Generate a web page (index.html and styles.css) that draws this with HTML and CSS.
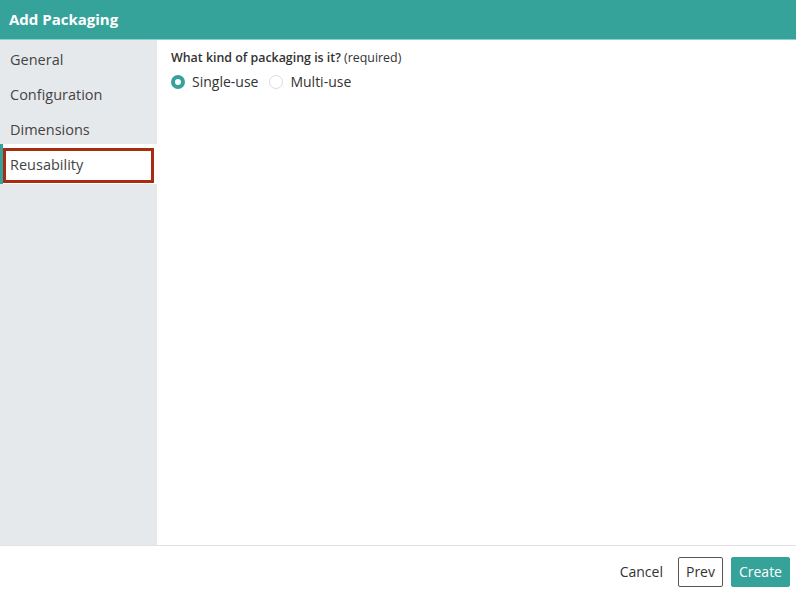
FILE: index.html
```html
<!DOCTYPE html>
<html>
<head>
<meta charset="utf-8">
<link rel="stylesheet" href="styles.css">
</head>
<body>
<div class="dialog">
  <header class="header">Add Packaging</header>
  <div class="main">
    <nav class="sidebar">
      <div class="nav-item">General</div>
      <div class="nav-item">Configuration</div>
      <div class="nav-item">Dimensions</div>
      <div class="nav-item active"><span class="focus">Reusability</span></div>
    </nav>
    <section class="content">
      <div class="question"><b>What kind of packaging is it?</b> (required)</div>
      <div class="radios">
        <label class="radio"><span class="dot checked"></span>Single-use</label>
        <label class="radio"><span class="dot"></span>Multi-use</label>
      </div>
    </section>
  </div>
  <footer class="footer">
    <button class="btn link">Cancel</button>
    <button class="btn outline">Prev</button>
    <button class="btn primary">Create</button>
  </footer>
</div>
</body>
</html>
```
FILE: styles.css
```css
* { box-sizing: border-box; }
html, body { margin: 0; padding: 0; }
body {
  font-family: "Open Sans", "Noto Sans", sans-serif;
  color: #3d3d3d;
  background: #fff;
}
.dialog {
  width: 796px;
  height: 597px;
  display: flex;
  flex-direction: column;
}
.header {
  height: 40px;
  background: #35a39a;
  color: #fff;
  font-family: "Open Sans", sans-serif;
  font-weight: 700;
  font-size: 15px;
  padding: 9px 0 0 9px;
  border-bottom: 1px solid #8fd0ca;
}
.main {
  flex: 1;
  display: flex;
}
.sidebar {
  width: 157px;
  background: #e6e9ec;
  padding-top: 4px;
  display: flex;
  flex-direction: column;
}
.nav-item {
  height: 35px;
  padding: 6px 0 0 10px;
  font-size: 14.5px;
  color: #444;
}
.nav-item.active {
  margin-top: -5px;
  height: 40px;
  background: #fff;
  border-left: 3px solid #35a39a;
  padding: 4px 3px 0 0;
}
.focus {
  display: block;
  height: 35px;
  border: 3px solid #a82d10;
  padding: 4px 0 0 4px;
  width: 151px;
}
.content {
  flex: 1;
  padding: 9px 14px;
}
.question {
  font-size: 12.4px;
  color: #333;
}
.question b { font-weight: 600; }
.radios {
  display: flex;
  gap: 11px;
  margin-top: 6px;
}
.radio {
  display: flex;
  align-items: center;
  font-size: 14px;
  color: #333;
}
.dot {
  width: 14px;
  height: 14px;
  border-radius: 50%;
  border: 1px solid #dcdcdc;
  margin-right: 7px;
  background: #fff;
}
.dot.checked {
  border: 4px solid #35a39a;
}
.footer {
  height: 52px;
  border-top: 1px solid #e3e3e3;
  display: flex;
  align-items: center;
  justify-content: flex-end;
  padding: 0 6px 0 0;
  gap: 8px;
}
.btn {
  font-family: "Open Sans", "Noto Sans", sans-serif;
  font-size: 14px;
  height: 30px;
  padding: 0 7px;
  border-radius: 2px;
  cursor: pointer;
}
.btn.link {
  background: none;
  border: none;
  color: #333;
  margin-right: 0;
}
.btn.outline {
  background: #fff;
  border: 1px solid #555;
  color: #333;
}
.btn.primary {
  background: #35a39a;
  border: 1px solid #35a39a;
  color: #fff;
}
```
